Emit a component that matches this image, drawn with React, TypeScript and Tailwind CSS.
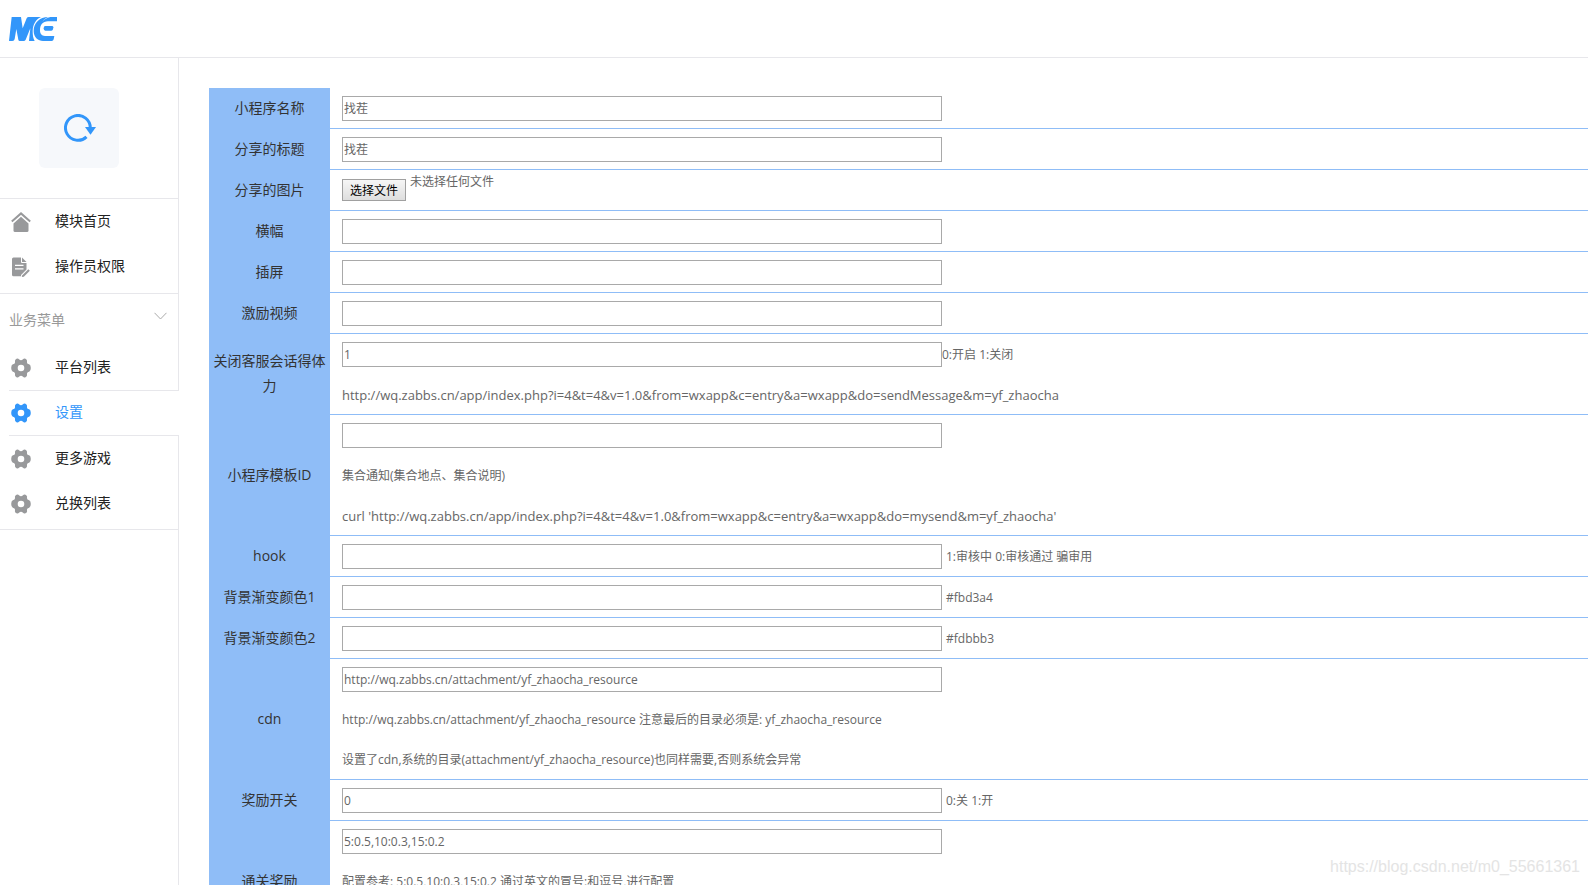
import { useRef } from 'react';
import type { ReactNode } from 'react';
import clsx from 'clsx';

type Field = {
  id: string;
  label: string;
  value?: string;
  hint?: string;
  tight?: boolean;
  // Request addresses are set one size up from the notes
  url?: string;
  notes?: string[];
};

const BASIC_FIELDS: Field[] = [
  { id: 'name', label: '小程序名称', value: '找茬' },
  { id: 'share-title', label: '分享的标题', value: '找茬' },
];

const FIELDS: Field[] = [
  { id: 'banner', label: '横幅' },
  { id: 'interstitial', label: '插屏' },
  { id: 'video', label: '激励视频' },
  {
    id: 'service',
    label: '关闭客服会话得体力',
    value: '1',
    hint: '0:开启 1:关闭',
    tight: true,
    url: 'http://wq.zabbs.cn/app/index.php?i=4&t=4&v=1.0&from=wxapp&c=entry&a=wxapp&do=sendMessage&m=yf_zhaocha',
  },
  {
    id: 'template',
    label: '小程序模板ID',
    notes: ['集合通知(集合地点、集合说明)'],
    url: "curl 'http://wq.zabbs.cn/app/index.php?i=4&t=4&v=1.0&from=wxapp&c=entry&a=wxapp&do=mysend&m=yf_zhaocha'",
  },
  { id: 'hook', label: 'hook', hint: '1:审核中 0:审核通过 骗审用' },
  { id: 'color1', label: '背景渐变颜色1', hint: '#fbd3a4' },
  { id: 'color2', label: '背景渐变颜色2', hint: '#fdbbb3' },
  {
    id: 'cdn',
    label: 'cdn',
    value: 'http://wq.zabbs.cn/attachment/yf_zhaocha_resource',
    notes: [
      'http://wq.zabbs.cn/attachment/yf_zhaocha_resource 注意最后的目录必须是: yf_zhaocha_resource',
      '设置了cdn,系统的目录(attachment/yf_zhaocha_resource)也同样需要,否则系统会异常',
    ],
  },
  { id: 'reward-switch', label: '奖励开关', value: '0', hint: '0:关 1:开' },
  {
    id: 'reward',
    label: '通关奖励',
    value: '5:0.5,10:0.3,15:0.2',
    notes: ['配置参考: 5:0.5,10:0.3,15:0.2 通过英文的冒号:和逗号,进行配置', ''],
  },
];

export default function App() {
  return (
    <div className="relative flex h-screen flex-col overflow-hidden bg-white font-['Open_Sans','Noto_Sans_CJK_SC',sans-serif] text-[#333]">
      <header className="flex h-[58px] shrink-0 items-center border-b border-[#e7e7eb] px-[9px]">
        <a href="#" aria-label="ME">
          <Logo />
        </a>
      </header>

      <div className="flex min-h-0 flex-1">
        <Sidebar />
        <main className="min-w-0 flex-1 overflow-hidden pl-[30px] pt-[30px]">
          <SettingsTable />
        </main>
      </div>

      <div className="pointer-events-none absolute bottom-1.5 right-2 font-['Liberation_Sans',sans-serif] text-base leading-6 text-[#e4e4e4]">
        https://blog.csdn.net/m0_55661361
      </div>
    </div>
  );
}

// ---------------------------------------------------------------------------
// Sidebar
// ---------------------------------------------------------------------------
function Sidebar() {
  return (
    <nav className="flex w-[179px] shrink-0 flex-col text-sm text-[#222]">
      <div className="flex h-[141px] items-start border-b border-r border-[#e7e7eb] pl-[39px] pt-[30px]">
        <div className="flex size-20 items-center justify-center rounded-md bg-[#f6f8fb]">
          <RefreshIcon />
        </div>
      </div>

      <div className="border-b border-r border-[#e7e7eb] pb-1">
        <NavItem icon={<HomeIcon />}>模块首页</NavItem>
        <NavItem icon={<DocIcon />}>操作员权限</NavItem>
      </div>

      <button className="flex h-[51px] items-center justify-between border-r border-[#e7e7eb] pl-[9px] pr-[11px] text-[#999]">
        业务菜单
        <svg className="mb-2" width="13" height="8" viewBox="0 0 13 8" fill="none" stroke="#aaa">
          <path d="M.5 .8L6.500 7L12.500 .8" />
        </svg>
      </button>

      <div className="h-[45px] border-r border-[#e7e7eb]">
        <NavItem icon={<GearIcon />}>平台列表</NavItem>
      </div>
      <div className="ml-[9px] h-[46px] border-y border-[#e7e7eb]">
        <NavItem icon={<GearIcon />} active>
          设置
        </NavItem>
      </div>
      <div className="border-b border-r border-[#e7e7eb] pb-[3px]">
        <NavItem icon={<GearIcon />}>更多游戏</NavItem>
        <NavItem icon={<GearIcon />}>兑换列表</NavItem>
      </div>
      <div className="flex-1 border-r border-[#e7e7eb]" />
    </nav>
  );
}

function NavItem({ icon, active, children }: { icon: ReactNode; active?: boolean; children: ReactNode }) {
  return (
    <a
      href="#"
      className={clsx('flex items-center gap-6', active ? 'h-11 pl-0.5 text-[#3296fa]' : 'h-[45px] pl-[11px]')}
    >
      <span className={active ? 'text-[#3296fa]' : 'text-[#98999b]'}>{icon}</span>
      <span className="pb-0.5">{children}</span>
    </a>
  );
}

// ---------------------------------------------------------------------------
// Settings form
// ---------------------------------------------------------------------------
function SettingsTable() {
  return (
    <table className="w-full border-collapse text-xs text-[#666]">
      <tbody>
        {BASIC_FIELDS.map((f) => (
          <FieldRow key={f.id} field={f} />
        ))}
        <FileRow />
        {FIELDS.map((f) => (
          <FieldRow key={f.id} field={f} />
        ))}
      </tbody>
    </table>
  );
}

function Row({ id, label, children }: { id: string; label: string; children: ReactNode }) {
  return (
    <tr>
      <th className="w-[121px] bg-[#8fbdf7] px-1 pb-0.5 text-center text-sm font-normal leading-[25px] text-[#333]">
        <label htmlFor={id}>{label}</label>
      </th>
      <td className="border-b border-[#8fbdf7] pl-3">{children}</td>
    </tr>
  );
}

function FieldRow({ field }: { field: Field }) {
  return (
    <Row id={field.id} label={field.label}>
      <div className="flex h-10 items-center">
        <input
          id={field.id}
          type="text"
          defaultValue={field.value}
          className="h-[25px] w-[600px] border border-[#a9a9a9] px-px text-xs text-[#666] outline-none"
        />
        {field.hint && <span className={clsx('pt-0.5', !field.tight && 'ml-1')}>{field.hint}</span>}
      </div>
      {field.notes?.map((note, i) => (
        <p key={i} className="h-10 pt-px leading-10">
          {note}
        </p>
      ))}
      {field.url && <p className="h-10 pt-px text-[13px] leading-10">{field.url}</p>}
    </Row>
  );
}

function FileRow() {
  const input = useRef<HTMLInputElement>(null);

  return (
    <Row id="share-image" label="分享的图片">
      <div className="flex h-10 items-center">
        <input ref={input} id="share-image" type="file" className="hidden" />
        <button
          type="button"
          onClick={() => input.current?.click()}
          className="h-[22px] w-16 border border-[#a0a0a0] bg-linear-to-b from-[#f6f6f6] to-[#dedede] pt-px leading-5 text-black"
        >
          选择文件
        </button>
        <span className="ml-1 self-start leading-6">未选择任何文件</span>
      </div>
    </Row>
  );
}

// ---------------------------------------------------------------------------
// Drawings
// ---------------------------------------------------------------------------
function Logo() {
  return (
    <svg width="48" height="24" viewBox="0 0 144 72" fill="#3296fa">
      <path d="M0 72L8 0H36L41 34L53 4Q55 0 59 0H96C80 8 72 22 71 42C71 54 72 64 77 72H60L64 34L50 68Q48 72 44 72H32Q29 72 28 68L22 36L17 66Q16 72 10 72Z" />
      <path d="M144 0H124C114 3 106 7 100 14C108 4 113 2 118 0C92 0 74 18 74 42C74 62 88 72 102 72H128Q133 72 134 67L136 57H108C98 57 93 50 93 40C93 24 101 13 117 13H144Z" />
      <path d="M109 27H129Q133 27 133 31L132 37Q131 41 127 41H109Q104 41 104 34Q104 27 109 27Z" />
    </svg>
  );
}

function RefreshIcon() {
  return (
    <svg className="ml-0.5" width="32" height="28" viewBox="0 0 32 28" fill="none">
      <path d="M22.500 22.800A12.400 12.400 0 1 1 26.300 14" stroke="#3296fa" strokeWidth="3" />
      <path d="M21 13H32L26.500 20.800Z" fill="#3296fa" />
    </svg>
  );
}

function HomeIcon() {
  return (
    <svg width="20" height="20" viewBox="0 0 20 20" fill="currentColor">
      <path d="M.8 9.600L10 1.400L19.200 9.600" fill="none" stroke="currentColor" strokeWidth="2" />
      <path d="M10 4.800L17.500 11.500V18.500Q17.500 20 16 20H4Q2.500 20 2.500 18.500V11.500Z" />
    </svg>
  );
}

function DocIcon() {
  return (
    <svg width="20" height="20" viewBox="0 0 20 20" fill="currentColor">
      <path d="M2.500 .5H10V5Q10 6 11 6H15.500V12.500L10 18V19.300H2.500Q1 19.300 1 17.800V2Q1 .5 2.500 .5ZM4 7.800V9H12.500V7.800ZM4 11.200V12.400H12.500V11.200Z" fillRule="evenodd" />
      <path d="M11 .5L15.500 5H11Z" />
      <path d="M17.300 12.200L18.800 13.700L12.800 19.700L10.800 20L11.100 18.400Z" />
    </svg>
  );
}

function GearIcon() {
  return (
    <svg width="20" height="20" viewBox="0 0 20 20" fill="currentColor">
      <path
        fillRule="evenodd"
        d="M5.500 .8Q7 .1 8 1.300Q10 3.300 12 1.300Q13 .1 14.500 .8Q16.500 1.800 16 3.500Q15.600 5.900 18.200 6.300Q19.800 6.900 19.800 10Q19.800 13.100 18.200 13.700Q15.600 14.100 16 16.500Q16.500 18.200 14.500 19.200Q13 19.900 12 18.700Q10 16.700 8 18.700Q7 19.900 5.500 19.200Q3.500 18.200 4 16.500Q4.400 14.100 1.800 13.700Q.2 13.100 .2 10Q.2 6.900 1.800 6.300Q4.400 5.900 4 3.500Q3.500 1.800 5.500 .8ZM10 6.700A3.300 3.300 0 1 0 10 13.300A3.300 3.300 0 1 0 10 6.700Z"
      />
    </svg>
  );
}
